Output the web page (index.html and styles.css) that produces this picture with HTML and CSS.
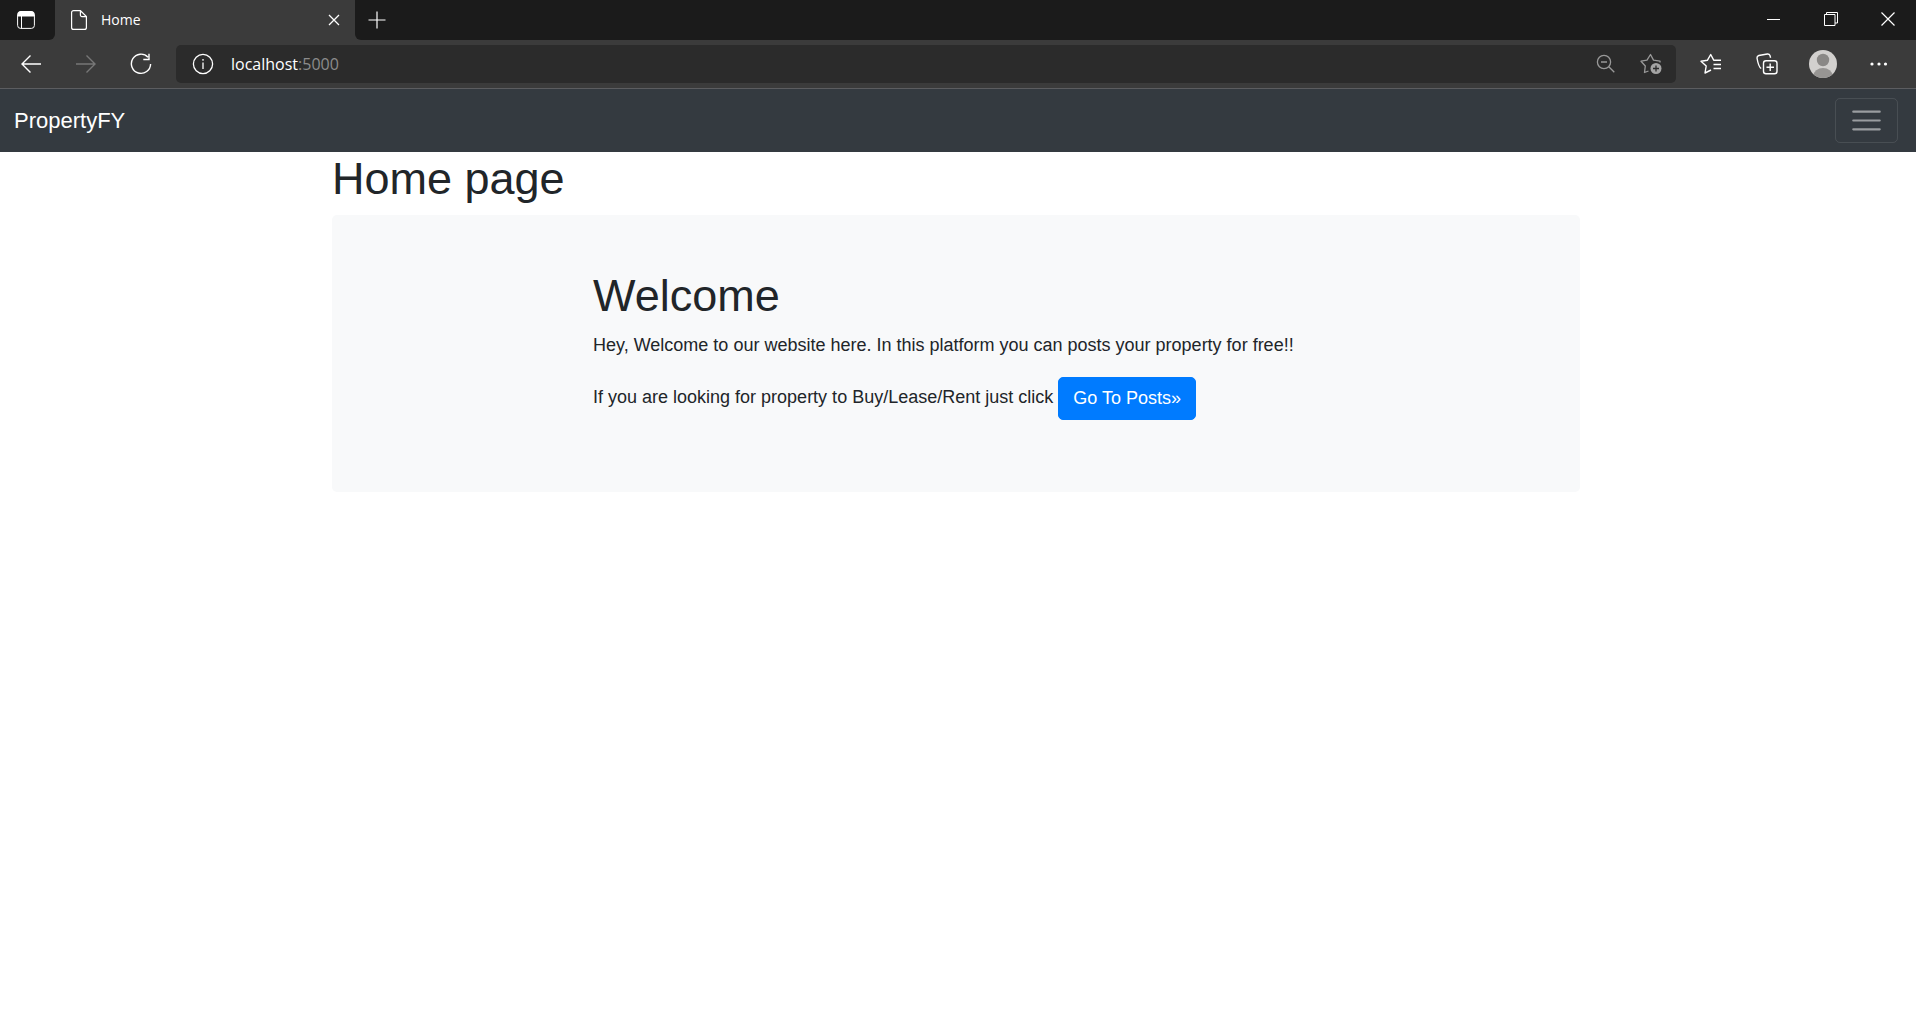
FILE: index.html
```html
<!DOCTYPE html>
<html lang="en">
<head>
<meta charset="utf-8">
<meta name="viewport" content="width=device-width, initial-scale=1">
<title>Home</title>
<link rel="stylesheet" href="styles.css">
</head>
<body>
<div class="browser">
  <div class="tab-strip">
    <button class="icon-btn tab-actions" aria-label="Tab actions">
      <svg width="18" height="18" viewBox="0 0 18 18" fill="none" stroke="#fff"><rect x=".6" y=".6" width="16.8" height="16.8" rx="3"/><path d="M1 3.5q0-3 3-3h10q3 0 3 3V5H1z" fill="#fff"/><path d="M4.5 5v12.4"/></svg>
    </button>
    <div class="tab">
      <svg width="16" height="20" viewBox="0 0 16 20" fill="none" stroke="#fff" stroke-width="1.2"><path d="M9.4.6H2.6a2 2 0 0 0-2 2v14.8a2 2 0 0 0 2 2h10.8a2 2 0 0 0 2-2V6.6zM9.4.6v4.5a1.5 1.5 0 0 0 1.5 1.5h4.5"/></svg>
      <span class="tab-title">Home</span>
      <button class="icon-btn" aria-label="Close tab">
        <svg width="12" height="12" viewBox="0 0 12 12" stroke="#fff" stroke-width="1.3"><path d="M1 1l10 10M11 1L1 11"/></svg>
      </button>
    </div>
    <button class="icon-btn new-tab" aria-label="New tab">
      <svg width="18" height="18" viewBox="0 0 18 18" stroke="#fff" stroke-width="1.2"><path d="M9 .5v17M.5 9h17"/></svg>
    </button>
    <div class="window-controls">
      <button class="icon-btn" aria-label="Minimize"><svg width="14" height="14" viewBox="0 0 14 14" stroke="#fff"><path d="M0 7.5h13"/></svg></button>
      <button class="icon-btn" aria-label="Restore"><svg width="14" height="14" viewBox="0 0 14 14" fill="none" stroke="#fff"><path d="M.5 2.500h10.500v11H.5zM2.500 2.500v-2h11v10.500H11"/></svg></button>
      <button class="icon-btn" aria-label="Close window"><svg width="14" height="14" viewBox="0 0 14 14" stroke="#fff" stroke-width="1.2"><path d="M.5.5l13 13M13.500.5l-13 13"/></svg></button>
    </div>
  </div>
  <div class="toolbar">
    <div class="nav-buttons">
      <button class="icon-btn" aria-label="Back"><svg width="22" height="20" viewBox="0 0 22 20" fill="none" stroke="#fff" stroke-width="1.4"><path d="M21 10H2M10.500 1.500L2 10l8.500 8.500"/></svg></button>
      <button class="icon-btn" aria-label="Forward" disabled><svg width="22" height="20" viewBox="0 0 22 20" fill="none" stroke="#777" stroke-width="1.4"><path d="M1 10h19M11.500 1.500L20 10l-8.500 8.500"/></svg></button>
      <button class="icon-btn" aria-label="Refresh"><svg width="22" height="22" viewBox="0 0 22 22" fill="none" stroke="#fff" stroke-width="1.4"><path d="M18 4.200A9.600 9.600 0 1 0 20.600 11M19 .8v5.700h-5.700"/></svg></button>
    </div>
    <div class="address-bar">
      <svg width="22" height="22" viewBox="0 0 22 22" fill="none" stroke="#fff" stroke-width="1.3"><circle cx="11" cy="11" r="9.600"/><path d="M11 9.500V16M11 6v1.700"/></svg>
      <span class="address">localhost<span class="port">:5000</span></span>
      <div class="address-actions">
        <button class="icon-btn" aria-label="Zoom"><svg width="20" height="20" viewBox="0 0 20 20" fill="none" stroke="#999" stroke-width="1.3"><circle cx="8" cy="8" r="6.600"/><path d="M5 8h6M12.800 12.800l5.500 5.500"/></svg></button>
        <button class="icon-btn" aria-label="Add to favorites"><svg width="22" height="22" viewBox="0 0 22 22" fill="none" stroke="#999" stroke-width="1.3" stroke-linejoin="round"><path d="M8.500 18L4.500 19.500l.8-6.500L1 8.200l6-1.100L10.500 1.500l3 5.600 6.500 1v1.500"/><circle cx="16" cy="15.500" r="5.500" fill="#a4a4a4" stroke="none"/><path d="M16 12.500v6M13 15.500h6" stroke="#2b2b2b"/></svg></button>
      </div>
    </div>
    <div class="browser-actions">
      <button class="icon-btn" aria-label="Favorites"><svg width="22" height="22" viewBox="0 0 22 22" fill="none" stroke="#fff" stroke-width="1.4" stroke-linejoin="round"><path d="M11 17l-6 3 1.200-7L1 8.200l6.500-1L10.700 1.500l3 5.700H21M13.500 11.500H21M13.500 15.500H21"/></svg></button>
      <button class="icon-btn" aria-label="Collections"><svg width="22" height="22" viewBox="0 0 22 22" fill="none" stroke="#fff" stroke-width="1.4"><rect x="7.500" y="7.700" width="13.500" height="13" rx="2.500"/><path d="M14.200 10.500v7.500M10.500 14.200H18M5.200 15.500C2.500 14 1.500 8 1 5q-.1-2 1.800-2.500l8.500-1.500q2-.2 2.700 1.600l.6 2.200"/></svg></button>
      <button class="icon-btn" aria-label="Profile"><svg width="28" height="28" viewBox="0 0 28 28"><defs><clipPath id="avatar"><circle cx="14" cy="14" r="14"/></clipPath></defs><g clip-path="url(#avatar)"><path d="M0 0h28v28H0z" fill="#d2d0ce"/><circle cx="14" cy="10" r="6.200" fill="#8a8886"/><ellipse cx="14" cy="25.500" rx="9.500" ry="7.500" fill="#979593"/></g></svg></button>
      <button class="icon-btn" aria-label="Settings and more"><svg width="18" height="4" viewBox="0 0 18 4" fill="#fff"><circle cx="2" cy="2" r="1.600"/><circle cx="9" cy="2" r="1.600"/><circle cx="15.500" cy="2" r="1.600"/></svg></button>
    </div>
  </div>
</div>

<nav class="navbar">
  <a class="brand" href="#">PropertyFY</a>
  <button class="navbar-toggler" aria-label="Toggle navigation">
    <svg width="33" height="33" viewBox="0 0 30 30" stroke="rgba(255,255,255,.5)" stroke-width="2" stroke-linecap="round" stroke-miterlimit="10"><path d="M3 7h24M3 15h24M3 23h24"/></svg>
  </button>
</nav>

<div class="page">
  <main class="container">
    <h1>Home page</h1>
    <section class="jumbotron">
      <div class="intro">
        <h1>Welcome</h1>
        <p>Hey, Welcome to our website here. In this platform you can posts your property for free!!</p>
        <p>If you are looking for property to Buy/Lease/Rent just click <a class="btn" href="#">Go To Posts»</a></p>
      </div>
    </section>
  </main>
</div>
</body>
</html>
```

FILE: styles.css
```css
* {
  box-sizing: border-box;
}

body {
  margin: 0;
  background: #fff;
  color: #212529;
  font: 18px/27px "Liberation Sans", Arial, sans-serif;
}

svg {
  display: block;
}

.icon-btn {
  display: flex;
  align-items: center;
  justify-content: center;
  padding: 0;
  border: 0;
  background: none;
}

/* Browser window */
.browser {
  background: #3b3b3b;
  border-bottom: 1px solid #5c5d60;
  color: #fff;
  font-family: "Open Sans", "Noto Sans", sans-serif;
}

.tab-strip {
  display: flex;
  height: 40px;
  background: #3b3b3b;
}

.tab-actions {
  width: 55px;
  background: #1b1b1b;
  border-radius: 0 0 6px 0;
  padding-right: 3px;
}

.tab {
  display: flex;
  align-items: center;
  width: 300px;
  padding: 0 15px 0 16px;
  gap: 14px;
  background: #3b3b3b;
}

.tab-title {
  flex: 1;
  font-size: 14px;
  line-height: 20px;
}

.new-tab {
  width: 44px;
  background: #1b1b1b;
  border-radius: 0 0 0 6px;
}

.window-controls {
  display: flex;
  flex: 1;
  justify-content: flex-end;
  background: #1b1b1b;
}

.window-controls .icon-btn {
  width: 57px;
  height: 37px;
}

.toolbar {
  display: flex;
  align-items: center;
  height: 48px;
}

.nav-buttons {
  display: flex;
  width: 176px;
  padding-left: 3px;
}

.nav-buttons .icon-btn {
  width: 55px;
  height: 38px;
}

.address-bar {
  display: flex;
  flex: 1;
  align-items: center;
  height: 38px;
  padding: 0 14px 0 16px;
  gap: 17px;
  border-radius: 5px;
  background: #2b2b2b;
}

.address {
  flex: 1;
  font-size: 16px;
  line-height: 24px;
}

.port {
  color: #8c8c8c;
}

.address-actions {
  display: flex;
  gap: 24px;
}

.browser-actions {
  display: flex;
  width: 240px;
  padding-left: 7px;
}

.browser-actions .icon-btn {
  width: 56px;
  height: 38px;
}

/* Site navigation */
.navbar {
  display: flex;
  align-items: center;
  justify-content: space-between;
  padding: 9px 18px 9px 14px;
  background: #343a40;
}

.brand {
  color: #fff;
  font-size: 22px;
  line-height: 34px;
  text-decoration: none;
}

.navbar-toggler {
  padding: 5px 14px;
  border: 1px solid rgba(255, 255, 255, .1);
  border-radius: 5px;
  background: none;
}

/* Page content */
.page {
  padding-right: 4px;
}

.container {
  max-width: 1248px;
  margin: 0 auto;
}

h1 {
  margin: 0 0 9px;
  font-size: 45px;
  font-weight: 400;
  line-height: 54px;
}

.jumbotron {
  padding: 54px 36px;
  border-radius: 5px;
  background: #f8f9fa;
}

.intro {
  max-width: 726px;
  margin: 0 auto;
}

p {
  margin: 0 0 18px;
}

.btn {
  display: inline-block;
  padding: 7px 14px;
  border: 1px solid #007bff;
  border-radius: 5px;
  background: #007bff;
  color: #fff;
  text-decoration: none;
  vertical-align: middle;
}
```
